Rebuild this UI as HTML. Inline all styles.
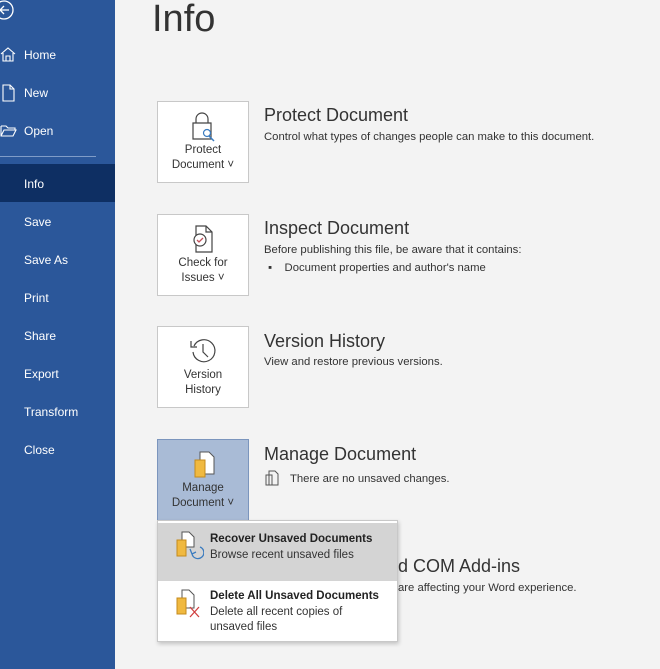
<!DOCTYPE html>
<html><head><meta charset="utf-8"><style>
*{margin:0;padding:0;box-sizing:border-box}
body{width:660px;height:669px;overflow:hidden;background:#f3f3f3;font-family:"Liberation Sans",sans-serif;position:relative}
.side{position:absolute;left:0;top:0;width:115px;height:669px;background:#2b579a;color:#fff}
.side .it{position:absolute;left:24px;font-size:12px}
.sel{position:absolute;left:0;top:164px;width:115px;height:38px;background:#0e2f63}
.hr{position:absolute;left:0;top:156px;width:96px;height:1px;background:#7f9cc8}
h1{position:absolute;left:152px;top:-2px;font-weight:300;font-size:38px;color:#333}
.tile{position:absolute;left:157px;width:92px;height:82px;background:#fff;border:1px solid #c8c8c8;text-align:center;font-size:11.5px;color:#333;line-height:15px}
.tile svg{display:block;margin:9px auto 0}
.t{position:absolute;left:264px;font-size:18px;color:#333}
.d{position:absolute;left:264px;font-size:11.3px;color:#333}
.menu{position:absolute;left:157px;top:520px;width:241px;height:122px;background:#fff;border:1px solid #c8c8c8;box-shadow:1px 2px 4px rgba(0,0,0,.2)}
.mi{position:absolute;left:0;width:239px;font-size:11.5px;color:#333;line-height:16px}
.mi b{display:block;font-size:11.5px;color:#222}
</style></head><body>
<div class="side">
<div class="sel"></div>
<svg style="position:absolute;left:-6px;top:-2px" width="24" height="24"><circle cx="10" cy="12" r="9" fill="none" stroke="#fff" stroke-width="1.3"/><path d="M15 12H6M10 8l-4 4 4 4" fill="none" stroke="#fff" stroke-width="1.3"/></svg>
<svg style="position:absolute;left:0;top:46px" width="18" height="16"><path d="M1 8L8 2l7 6M3 7v8h10V7M6 15v-5h4v5" fill="none" stroke="#fff" stroke-width="1.1"/></svg>
<svg style="position:absolute;left:2px;top:84px" width="14" height="18"><path d="M1 1h7l4 4v12H1zM8 1v4h4" fill="none" stroke="#fff" stroke-width="1.1"/></svg>
<svg style="position:absolute;left:0;top:124px" width="18" height="14"><path d="M1 2h5l2 2h7v2M1 2v10h12l3-6H4L1 12" fill="none" stroke="#fff" stroke-width="1.1"/></svg>
<div class="it" style="top:48px">Home</div>
<div class="it" style="top:86px">New</div>
<div class="it" style="top:124px">Open</div>
<div class="hr"></div>
<div class="it" style="top:177px">Info</div>
<div class="it" style="top:215px">Save</div>
<div class="it" style="top:253px">Save As</div>
<div class="it" style="top:291px">Print</div>
<div class="it" style="top:329px">Share</div>
<div class="it" style="top:367px">Export</div>
<div class="it" style="top:405px">Transform</div>
<div class="it" style="top:443px">Close</div>
</div>
<h1>Info</h1>

<div class="tile" style="top:101px"><svg width="30" height="32"><path d="M8 12V8a6 6 0 0 1 12 0v4M5 12h18v16H5z" fill="none" stroke="#444" stroke-width="1.2"/><circle cx="19" cy="22" r="3.5" fill="#fff" stroke="#3a7bbf" stroke-width="1.2"/><path d="M21 25l5 5" stroke="#3a7bbf" stroke-width="1.5"/></svg>Protect<br>Document ˅</div>
<div class="t" style="top:105px">Protect Document</div>
<div class="d" style="top:131px">Control what types of changes people can make to this document.</div>

<div class="tile" style="top:214px"><svg width="30" height="32"><path d="M8 2h10l6 6v20H8zM18 2v6h6" fill="none" stroke="#444" stroke-width="1.2"/><circle cx="12" cy="16" r="6" fill="#fff" stroke="#444" stroke-width="1.2"/><path d="M9 16l2 2 4-4" fill="none" stroke="#c0505a" stroke-width="1.3"/></svg>Check for<br>Issues ˅</div>
<div class="t" style="top:218px">Inspect Document</div>
<div class="d" style="top:244px">Before publishing this file, be aware that it contains:</div>
<div class="d" style="top:262px;left:268px">▪&nbsp;&nbsp;&nbsp;&nbsp;Document properties and author's name</div>

<div class="tile" style="top:326px"><svg width="30" height="32"><path d="M6 10a11 11 0 1 1-1 6" fill="none" stroke="#444" stroke-width="1.2"/><path d="M3 5v6h6M15 8v8l5 5" fill="none" stroke="#444" stroke-width="1.2"/></svg>Version<br>History</div>
<div class="t" style="top:331px">Version History</div>
<div class="d" style="top:356px">View and restore previous versions.</div>

<div class="tile" style="top:439px;background:#a9bbd6;border-color:#7b95bd"><svg width="30" height="32"><path d="M12 3h9l5 5v17H12z" fill="#fff" stroke="#555"/><rect x="7" y="11" width="10" height="17" fill="#f0b940" stroke="#c48a1c"/></svg>Manage<br>Document ˅</div>
<div class="t" style="top:444px">Manage Document</div>
<div class="d" style="top:473px;left:290px">There are no unsaved changes.</div>
<svg style="position:absolute;left:265px;top:470px" width="14" height="16"><path d="M4 1h6l3 3v11H4zM1 5h6v10H1z" fill="none" stroke="#555"/></svg>
<div class="t" style="top:556px;left:398px">d COM Add-ins</div>
<div class="d" style="top:582px;left:398px">are affecting your Word experience.</div>

<div class="menu">
<div class="mi" style="top:2px;height:58px;background:#d4d4d4;padding:8px 0 0 52px"><b>Recover Unsaved Documents</b>Browse recent unsaved files</div>
<div class="mi" style="top:62px;padding:6px 0 0 52px;line-height:15px"><b style="margin-bottom:1px">Delete All Unsaved Documents</b>Delete all recent copies of<br>unsaved files</div>
<svg style="position:absolute;left:16px;top:10px" width="30" height="30"><path d="M8 1h7l5 5v10H8z" fill="#fff" stroke="#555"/><rect x="3" y="9" width="9" height="16" fill="#f0b940" stroke="#c48a1c"/><path d="M26 16a6 6 0 1 1-8 7M16 18l2 5 4-2" fill="none" stroke="#3a7bbf" stroke-width="1.3"/></svg>
<svg style="position:absolute;left:16px;top:68px" width="32" height="32"><path d="M8 1h7l5 5v13H8z" fill="#fff" stroke="#555"/><rect x="3" y="9" width="9" height="16" fill="#f0b940" stroke="#c48a1c"/><path d="M16 18l9 10M25 18l-9 10" stroke="#d04040" stroke-width="1.3"/></svg>
</div>
</body></html>
